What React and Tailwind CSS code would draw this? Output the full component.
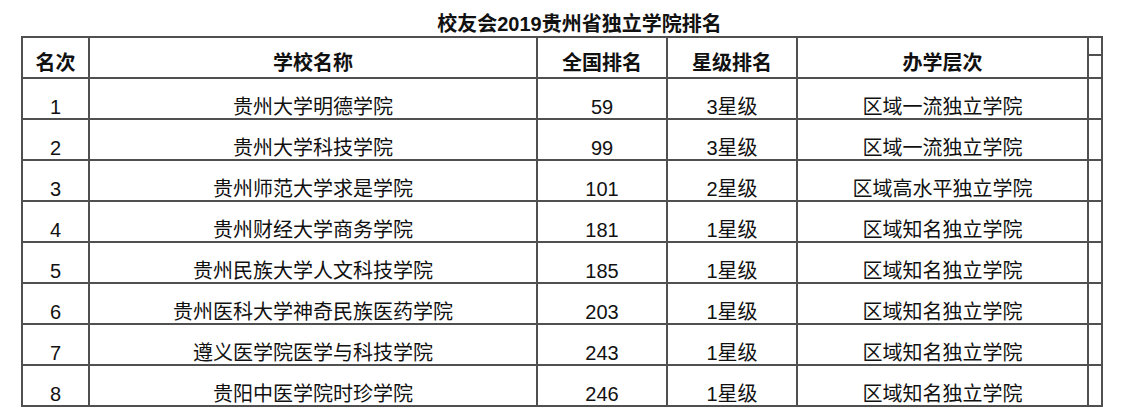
const rows = [
  ["1", "贵州大学明德学院", "59", "3星级", "区域一流独立学院"],
  ["2", "贵州大学科技学院", "99", "3星级", "区域一流独立学院"],
  ["3", "贵州师范大学求是学院", "101", "2星级", "区域高水平独立学院"],
  ["4", "贵州财经大学商务学院", "181", "1星级", "区域知名独立学院"],
  ["5", "贵州民族大学人文科技学院", "185", "1星级", "区域知名独立学院"],
  ["6", "贵州医科大学神奇民族医药学院", "203", "1星级", "区域知名独立学院"],
  ["7", "遵义医学院医学与科技学院", "243", "1星级", "区域知名独立学院"],
  ["8", "贵阳中医学院时珍学院", "246", "1星级", "区域知名独立学院"],
];

const headers = ["名次", "学校名称", "全国排名", "星级排名", "办学层次"];

export default function App() {
  return (
    <div
      className="w-[1130px] h-[417px] bg-white text-[#111] overflow-hidden"
      style={{ fontFamily: '"Liberation Sans", "Noto Sans CJK SC", sans-serif' }}
    >
      {/* TITLE */}
      <div className="w-[1159px] h-[36px] flex items-end justify-center pb-[2px]">
        <h1 className="text-[20px] leading-[20px] font-bold">校友会2019贵州省独立学院排名</h1>
      </div>

      {/* TABLE */}
      <div className="pl-[21px]">
        <table className="table-fixed border-collapse w-[1080px]">
          <colgroup>
            <col className="w-[67px]" />
            <col className="w-[448px]" />
            <col className="w-[130px]" />
            <col className="w-[130px]" />
            <col className="w-[291px]" />
            <col className="w-[14px]" />
          </colgroup>
          <thead>
            <tr className="h-[41px]">
              {headers.map((h) => (
                <th
                  key={h}
                  className="border-2 border-[#505050] p-0 align-bottom text-center text-[20px] leading-[20px] font-bold pb-[4px]"
                >
                  {h}
                </th>
              ))}
              <th className="border-2 border-[#505050] p-0 align-top">
                <div className="h-[18px] border-b-2 border-[#505050]" />
              </th>
            </tr>
          </thead>
          <tbody>
            {rows.map((r) => (
              <tr key={r[0]} className="h-[41px]">
                {r.map((c, i) => (
                  <td
                    key={i}
                    className="border-2 border-[#505050] p-0 pb-[1px] align-bottom text-center text-[20px] leading-[20px]"
                  >
                    {c}
                  </td>
                ))}
                <td className="border-2 border-[#505050] p-0" />
              </tr>
            ))}
          </tbody>
        </table>
      </div>
    </div>
  );
}
